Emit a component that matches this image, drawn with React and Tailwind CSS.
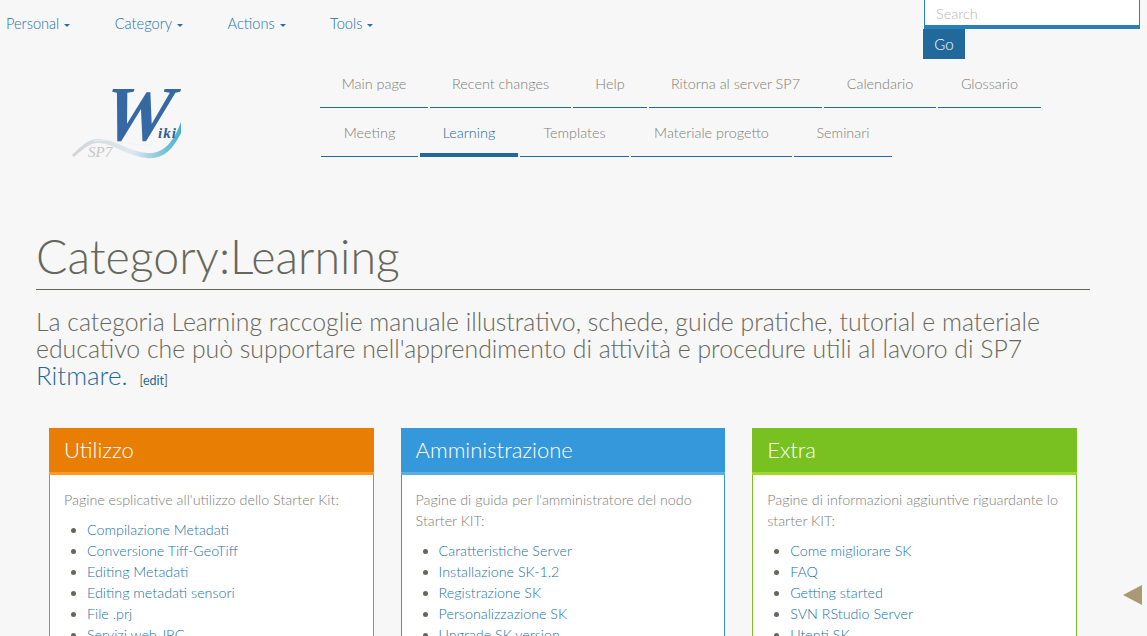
import React from 'react';

const navItems = ['Personal', 'Category', 'Actions', 'Tools'];
const tabRows = [
  [
    ['Main page', 'w-[108px]'],
    ['Recent changes', 'w-[141px]'],
    ['Help', 'w-[74px]'],
    ['Ritorna al server SP7', 'w-[173px]'],
    ['Calendario', 'w-[112px]'],
    ['Glossario', 'w-[103px]'],
  ],
  [
    ['Meeting', 'w-[97px]'],
    ['Learning', 'w-[98px]'],
    ['Templates', 'w-[109px]'],
    ['Materiale progetto', 'w-[161px]'],
    ['Seminari', 'w-[98px]'],
  ],
];

const cards = [
  {
    title: 'Utilizzo',
    head: 'bg-[#e87e04] border-[#ff9a26]',
    border: 'border-[#e87e04]',
    intro: "Pagine esplicative all'utilizzo dello Starter Kit:",
    links: ['Compilazione Metadati', 'Conversione Tiff-GeoTiff', 'Editing Metadati', 'Editing metadati sensori', 'File .prj', 'Servizi web JRC'],
  },
  {
    title: 'Amministrazione',
    head: 'bg-[#3498db] border-[#5dade2]',
    border: 'border-[#3498db]',
    intro: "Pagine di guida per l'amministratore del nodo Starter KIT:",
    links: ['Caratteristiche Server', 'Installazione SK-1.2', 'Registrazione SK', 'Personalizzazione SK', 'Upgrade SK version'],
  },
  {
    title: 'Extra',
    head: 'bg-[#78c120] border-[#a0d92c]',
    border: 'border-[#78c120]',
    intro: 'Pagine di informazioni aggiuntive riguardante lo starter KIT:',
    links: ['Come migliorare SK', 'FAQ', 'Getting started', 'SVN RStudio Server', 'Utenti SK'],
  },
];

const Logo = () => (
  <svg width="135" height="90" viewBox="0 0 135 90" className="block">
    <defs>
      <linearGradient id="wave" x1="0" x2="1" y1="0" y2="0">
        <stop offset="0" stopColor="#d4d4d4" />
        <stop offset="0.55" stopColor="#dde9f0" />
        <stop offset="1" stopColor="#45b0cd" />
      </linearGradient>
    </defs>
    <path d="M12 80 C24 68 30 63 40 64 C56 65 70 77 88 78 C104 79 114 66 121 47 L121 58 C112 76 102 85 86 83 C68 81 54 69 40 68 C31 67 24 73 14 82 Z" fill="url(#wave)" />
    <path d="M34 66 C54 62 70 72 92 70" fill="none" stroke="#eef4f7" strokeWidth="1" />
    <text x="28" y="82" fontFamily="Liberation Serif, serif" fontStyle="italic" fontSize="15" fill="#c4c4c4">SP7</text>
    <text x="0" y="0" transform="translate(40 65) skewX(-8)" fontFamily="Liberation Serif, serif" fontStyle="italic" fontWeight="700" fontSize="78" fill="#3469a4">W</text>
    <text x="98" y="63" fontFamily="Liberation Serif, serif" fontStyle="italic" fontWeight="700" fontSize="15" letterSpacing="1" fill="#33618f">iki</text>
  </svg>
);

const Card = ({ card }) => (
  <div className={`w-[324.6px] bg-white border ${card.border}`}>
    <div className={`${card.head} border-b-[3px] h-[47px] -mx-px -mt-px px-[15px] pt-[6px] text-[22px] leading-[31px] text-white font-light`}>
      {card.title}
    </div>
    <div className="px-[14px] pt-[14px] text-[14.3px] leading-[21px] text-[#7d7d76] font-light">
      <p className="mb-[9px]">{card.intro}</p>
      <ul className="list-disc pl-[23px] marker:text-[#66675c]">
        {card.links.map((l) => (
          <li key={l}><a className="text-[#2472a8]">{l}</a></li>
        ))}
      </ul>
    </div>
  </div>
);

export default function App() {
  return (
    <div className="relative h-[636px] overflow-hidden bg-[#f7f7f7] text-[#66675c] font-['Lato',sans-serif]">
      {/* top nav */}
      <div className="flex h-[59px]">
        <div className="flex items-start pl-[6px] pt-[15px] gap-[44.4px] text-[14.6px] leading-[18px] font-light text-[#2472a8]">
          {navItems.map((n) => (
            <span key={n} className="flex items-center">
              {n}
              <span className="ml-[5px] mt-[2px] border-x-[3px] border-t-[3px] border-x-transparent border-t-[#2472a8]" />
            </span>
          ))}
        </div>
        <div className="ml-auto mr-[7px] w-[217px]">
          <div className="ml-px h-[29px] bg-white border-x border-b-4 border-[#2980b9] pl-[11px] text-[14.5px] leading-[27px] text-[#b5b5b5] font-light">
            Search
          </div>
          <button className="block w-[42px] h-[30px] bg-[#22699b] text-[15px] font-light text-white">Go</button>
        </div>
      </div>

      {/* logo + tabs */}
      <div className="flex">
        <div className="w-[320px] pl-[60px] pt-[16px]">
          <Logo />
        </div>
        <div>
          {tabRows.map((row, i) => (
            <div key={i} className={`flex gap-[2px] ${i === 1 ? 'ml-px' : ''}`}>
              {row.map(([t, w]) => {
                const active = t === 'Learning';
                return (
                  <div
                    key={t}
                    className={`${w} h-[49px] pt-[16px] text-center text-[14.4px] leading-[18px] font-light whitespace-nowrap ${active ? 'border-b-4 text-[#22699b]' : 'border-b text-[#7d7d76]'} border-[#22699b]`}
                  >
                    {t}
                  </div>
                );
              })}
            </div>
          ))}
        </div>
      </div>

      {/* content */}
      <div className="ml-[36px] w-[1054px] mt-[65px]">
        <h1 className="text-[46.5px] leading-[52px] font-light pb-[7px] border-b border-[#66675c]">Category:Learning</h1>
        <p className="mt-[18px] text-[24.8px] leading-[27px] font-light">
          La categoria Learning raccoglie manuale illustrativo, schede, guide pratiche, tutorial e materiale educativo che può supportare nell'apprendimento di attività e procedure utili al lavoro di SP7 <a className="text-[25.9px] text-[#22699b]">Ritmare.</a>
          <span className="ml-[12px] text-[12.5px] font-normal">[<a className="text-[#22699b]">edit</a>]</span>
        </p>
      </div>

      <div className="flex gap-[27px] ml-[49px] mt-[34px]">
        {cards.map((c) => (
          <Card key={c.title} card={c} />
        ))}
      </div>

      {/* floating toggle */}
      <div className="absolute left-[1123px] top-[585px] border-y-[10px] border-r-[19px] border-y-transparent border-r-[#a89a72]" />
    </div>
  );
}
